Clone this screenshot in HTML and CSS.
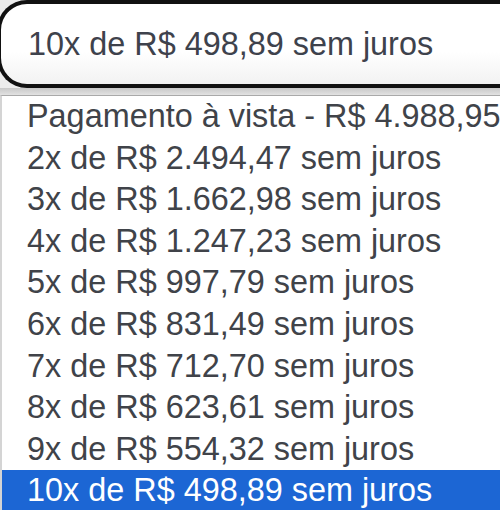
FILE: index.html
```html
<!DOCTYPE html>
<html>
<head>
<meta charset="utf-8">
<link rel="stylesheet" href="styles.css">
</head>
<body>
<div class="page">
  <div class="select-wrap">
    <div class="select"><span class="value">10x de R$ 498,89 sem juros</span></div>
  </div>
  <div class="gap"></div>
  <ul class="list">
    <li>Pagamento à vista - R$ 4.988,95</li>
    <li>2x de R$ 2.494,47 sem juros</li>
    <li>3x de R$ 1.662,98 sem juros</li>
    <li>4x de R$ 1.247,23 sem juros</li>
    <li>5x de R$ 997,79 sem juros</li>
    <li>6x de R$ 831,49 sem juros</li>
    <li>7x de R$ 712,70 sem juros</li>
    <li>8x de R$ 623,61 sem juros</li>
    <li>9x de R$ 554,32 sem juros</li>
    <li class="selected">10x de R$ 498,89 sem juros</li>
  </ul>
</div>
</body>
</html>
```
FILE: styles.css
```css
html, body {
  margin: 0;
  padding: 0;
  background: #ffffff;
}
.page {
  width: 500px;
  height: 510px;
  overflow: hidden;
  font-family: "Liberation Sans", Arial, sans-serif;
  font-size: 32.4px;
  color: #404349;
}
.select-wrap {
  background: #ececec;
  height: 88px;
}
.select {
  box-sizing: border-box;
  margin-left: -3px;
  width: 530px;
  height: 88px;
  border: 4px solid #111111;
  border-right: none;
  border-radius: 30px 0 0 30px;
  background: linear-gradient(#ffffff, #ffffff 60%, #f2f2f2);
  display: flex;
  align-items: center;
  padding-left: 27px;
}
.value {
  color: #3e424c;
  line-height: 1;
}
.gap {
  height: 7px;
  background: linear-gradient(#c8c8c8, #e2e2e2);
}
.list {
  list-style: none;
  margin: 0;
  padding: 0;
  border-top: 1px solid #a9a9a9;
  border-left: 2px solid #d4d4d4;
  background: #ffffff;
}
.list li {
  height: 41.6px;
  line-height: 41.6px;
  padding-left: 25px;
  white-space: nowrap;
  color: #404349;
}
.list li.selected {
  background: #1c66d4;
  color: #ffffff;
}
```
